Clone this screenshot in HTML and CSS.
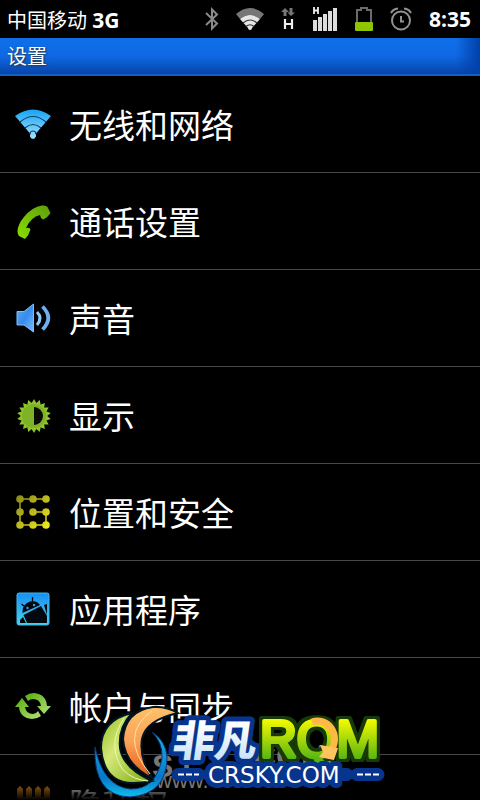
FILE: index.html
```html
<!DOCTYPE html>
<html lang="zh-CN">
<head>
  <meta charset="UTF-8">
  <meta name="viewport" content="width=device-width, initial-scale=1.0">
  <title>设置</title>
  <link rel="stylesheet" href="styles.css">
</head>
<body>

<div class="screen">
  <!-- 状态栏 -->
  <div class="status-bar">
    <div class="carrier">中国移动 <strong>3G</strong></div>
    <div class="status-icons">
      <svg width="14" height="24" viewBox="0 0 14 24" fill="none" stroke="#8a8a8a" stroke-width="2">
        <path d="M1 6 L12 16.500 L7 21.500 V2.500 L12 7.500 L1 18"/>
      </svg>
      <svg width="28" height="24" viewBox="0 0 28 24">
        <path d="M0 7 Q14 -5 28 7 L24 12 Q14 4 4 12 Z" fill="#777"/>
        <path d="M4 12 Q14 4 24 12 L16 21 A2 2 0 1 1 12 21 Z" fill="#e6e6e6"/>
        <path d="M7 16 Q14 10 21 16 M10 19.500 Q14 16 18 19.500" fill="none" stroke="#333" stroke-width="1.200"/>
      </svg>
      <svg width="14" height="24" viewBox="0 0 14 24">
        <path d="M4 1 L8 5 H5.500 V9 H2.500 V5 H0 Z M10 9 L6.500 5.500 H8.500 V1 H11.500 V5.500 H14 Z" fill="#777"/>
        <path d="M4 12 V22 M11 12 V22 M4 17 H11" fill="none" stroke="#eee" stroke-width="2.200"/>
      </svg>
      <svg width="26" height="24" viewBox="0 0 26 24">
        <path d="M2 0 V7 M6 0 V7 M2 3.500 H6" fill="none" stroke="#eee" stroke-width="1.800"/>
        <path d="M1 13 h4 v11 h-4z M6 10 h4 v14 h-4z M11 7 h4 v17 h-4z M16 4 h4 v20 h-4z M21 1 h4 v23 h-4z" fill="#ddd"/>
      </svg>
      <svg width="18" height="24" viewBox="0 0 18 24">
        <path d="M2 15 V3 H6 V1 H12 V3 H16 V15" fill="none" stroke="#6b6b6b" stroke-width="2"/>
        <rect x="0" y="15" width="18" height="9" rx="1" fill="#8fc400"/>
      </svg>
      <svg width="22" height="24" viewBox="0 0 22 24" fill="none" stroke="#929292" stroke-width="2">
        <circle cx="11" cy="13.500" r="9"/>
        <path d="M11 9 V14.500 H14 M1 6 Q3 2 8 1.500 M21 6 Q19 2 14 1.500"/>
      </svg>
      <strong class="clock">8:35</strong>
    </div>
  </div>

  <h1 class="title-bar">设置</h1>

  <!-- 设置列表 -->
  <nav class="settings">
    <a class="item" href="#">
      <svg class="icon" viewBox="0 0 40 40">
        <defs>
          <linearGradient id="wifi" x1="0" y1="0" x2="0" y2="1"><stop offset="0" stop-color="#16a4f5"/><stop offset="1" stop-color="#a5e0ff"/></linearGradient>
        </defs>
        <path d="M2 12 Q20 -1 38 12 L22.500 30 A3 3 0 1 1 17.500 30 Z" fill="url(#wifi)"/>
        <path d="M7 18 Q20 7 33 18 M12 24 Q20 17 28 24 M17 30 A3 3 0 0 1 23 30" fill="none" stroke="#0a4266" stroke-width="1.200"/>
      </svg>
      <span>无线和网络</span>
    </a>
    <a class="item" href="#">
      <svg class="icon" viewBox="0 0 40 40">
        <defs>
          <linearGradient id="phone" x1="1" y1="0" x2="0" y2="1"><stop offset="0" stop-color="#5f9c0c"/><stop offset="1" stop-color="#88e000"/></linearGradient>
        </defs>
        <path d="M29 4.500 Q33 4 34.500 6 L37.500 12 Q34 17 30 18.500 Q28 18 27 14 Q18 16 13 27 Q17 26 17.500 28.500 Q16 34 12 38 L6 35 Q4.500 33 4.500 30 Q5 23 11 16 Q19 6 29 4.500 Z" fill="url(#phone)"/>
      </svg>
      <span>通话设置</span>
    </a>
    <a class="item" href="#">
      <svg class="icon" viewBox="0 0 40 40">
        <defs>
          <linearGradient id="sound" x1="0" y1="0" x2="1" y2="1"><stop offset="0" stop-color="#5cabf8"/><stop offset=".5" stop-color="#368bec"/><stop offset="1" stop-color="#7bbcff"/></linearGradient>
        </defs>
        <path d="M4 13.500 H11 L20.500 6 V34 L11 27 H4 Z" fill="url(#sound)" stroke="#83bdf3"/>
        <path d="M24 14 Q30 20 24 27" fill="none" stroke="#8fc8ff" stroke-width="3"/>
        <path d="M29.500 8.500 Q41 20 29.500 31.500" fill="none" stroke="#70aef0" stroke-width="3.800"/>
      </svg>
      <span>声音</span>
    </a>
    <a class="item" href="#">
      <svg class="icon" viewBox="0 0 40 40">
        <defs>
          <path id="ray" d="M21 4 L35.700 29.500 L6.300 29.500 Z"/>
        </defs>
        <g fill="#8fc42d">
          <use href="#ray"/>
          <use href="#ray" transform="rotate(20 21 21)"/>
          <use href="#ray" transform="rotate(40 21 21)"/>
          <use href="#ray" transform="rotate(60 21 21)"/>
          <use href="#ray" transform="rotate(80 21 21)"/>
          <use href="#ray" transform="rotate(100 21 21)"/>
        </g>
        <circle cx="21" cy="21" r="12" fill="#7fb226"/>
        <path d="M21 12 A9 9 0 0 1 21 30 Z" fill="#080c02"/>
      </svg>
      <span>显示</span>
    </a>
    <a class="item" href="#">
      <svg class="icon" viewBox="0 0 40 40">
        <defs>
          <linearGradient id="lock" gradientUnits="userSpaceOnUse" x1="4" y1="4" x2="36" y2="36"><stop offset="0" stop-color="#8d8a16"/><stop offset="1" stop-color="#eeea20"/></linearGradient>
        </defs>
        <path d="M33 7 H7 V33 H33 V20 H20" fill="none" stroke="url(#lock)" stroke-width="1.500"/>
        <g fill="url(#lock)">
          <circle cx="7" cy="7" r="3.800"/><circle cx="20" cy="7" r="3.800"/><circle cx="33" cy="7" r="3.800"/>
          <circle cx="7" cy="20" r="3.800"/><circle cx="20" cy="20" r="3.800"/><circle cx="33" cy="20" r="3.800"/>
          <circle cx="7" cy="33" r="3.800"/><circle cx="20" cy="33" r="3.800"/><circle cx="33" cy="33" r="3.800"/>
        </g>
      </svg>
      <span>位置和安全</span>
    </a>
    <a class="item" href="#">
      <svg class="icon" viewBox="0 0 40 40">
        <defs>
          <linearGradient id="app" x1="0" y1="0" x2="0" y2="1"><stop offset="0" stop-color="#168ff5"/><stop offset="1" stop-color="#4bd2ee"/></linearGradient>
        </defs>
        <rect x="4" y="4" width="32" height="32" rx="2" fill="url(#app)" stroke="#3fb9ec"/>
        <path d="M9.500 24 Q9 15 17 12.500 Q24 11 27 16 Z" fill="#02090f"/>
        <path d="M11 17 L8.500 15 M19.500 12.500 V8" stroke="#02090f" stroke-width="1.300"/>
        <path d="M10.500 26 L28 17 L34 27 V34 H14 Z" fill="#02090f"/>
        <path d="M31 16 L34 15 V26 Z M7 31 L10 28 L13 34 H7 Z" fill="#02090f"/>
        <circle cx="14.500" cy="19" r="1.200" fill="#2ea5f2"/><circle cx="21" cy="16" r="1.200" fill="#2ea5f2"/>
      </svg>
      <span>应用程序</span>
    </a>
    <a class="item" href="#">
      <svg class="icon" viewBox="0 0 40 40">
        <defs>
          <linearGradient id="sync" x1="0" y1="0" x2="1" y2="1"><stop offset="0" stop-color="#55ae0d"/><stop offset="1" stop-color="#b5df78"/></linearGradient>
        </defs>
        <g fill="url(#sync)">
          <path d="M12 10 Q16 7 21 7 Q33 8 34 20 H38 L31 28 L24 20 H28 Q27 13 20 13 Q17 13 15 15 Z"/>
          <path d="M28 30 Q24 33 19 33 Q7 32 6 21 H2 L9 12 L16 21 H12 Q13 28 20 28 Q23 28 25 25 Z"/>
        </g>
      </svg>
      <span>帐户与同步</span>
    </a>
    <a class="item" href="#">
      <svg class="icon" viewBox="0 0 40 40">
        <path d="M4 6 L7 3 L10 6 V14 H13 V6 L16 3 L19 6 V14 H22 V6 L25 3 L28 6 V14 H31 V6 L34 3 L37 6 V36 H4 Z" fill="#e08818"/>
      </svg>
      <span>隐私权</span>
    </a>
  </nav>

  <div class="fade"></div>

  <!-- 水印 -->
  <svg class="watermark" viewBox="0 0 300 100">
    <defs>
      <linearGradient id="leaf" x1="0" y1="0" x2="1" y2="1"><stop offset="0" stop-color="#8fbd1c"/><stop offset=".4" stop-color="#d5e878"/><stop offset="1" stop-color="#76a80c"/></linearGradient>
      <linearGradient id="flame" x1="0" y1="0" x2="0" y2="1"><stop offset="0" stop-color="#ffc169"/><stop offset=".5" stop-color="#f9a257"/><stop offset="1" stop-color="#e85a12"/></linearGradient>
      <linearGradient id="wave" x1="0" y1="0" x2="0" y2="1"><stop offset="0" stop-color="#18b4ee"/><stop offset=".7" stop-color="#0878c8"/><stop offset="1" stop-color="#12bdea"/></linearGradient>
      <linearGradient id="lime" gradientUnits="userSpaceOnUse" x1="0" y1="20" x2="0" y2="58"><stop offset="0" stop-color="#f2fa00"/><stop offset="1" stop-color="#5cb612"/></linearGradient>
      <linearGradient id="ice" x1="0" y1="0" x2="0" y2="1"><stop offset=".3" stop-color="#ffffff"/><stop offset="1" stop-color="#b9dcf6"/></linearGradient>
    </defs>
    <g class="ghost">
      <text class="ghost-logo" x="62" y="77">SJ</text>
      <text class="ghost-logo" x="154" y="67">.COM</text>
      <text class="ghost-url" x="66" y="88">www.</text>
    </g>
    <path d="M5 47 Q3 96 40 97 Q77 94 77 57 Q76 41 62 32 Q73 43 72 58 Q66 90 40 89 Q13 86 5 47 Z" fill="url(#wave)" stroke="#06387a"/>
    <path d="M42 13 Q11 20 11 48 Q14 84 44 83 Q53 83 62 81 Q33 68 30 48 Q28 28 42 13 Z" fill="url(#leaf)" stroke="#021522" stroke-width="2"/>
    <path d="M88 13 Q76 6 63 7 Q35 11 33 39 Q35 65 62 78 Q49 58 52 39 Q56 20 88 13 Z" fill="url(#flame)" stroke="#021522" stroke-width="2"/>
    <path d="M34 18 Q16 45 33 70 Q43 80 58 81" fill="none" stroke="#eef6b0"/>
    <path d="M62 11 Q28 35 60 74" fill="none" stroke="#ffe0a8"/>
    <g class="badge-blue">
      <text class="brand" transform="skewX(-8)" x="89" y="56" fill="url(#ice)">非凡</text>
    </g>
    <text class="rqm" x="170" y="57" fill="url(#lime)" stroke="url(#lime)">RQM</text>
    <path d="M222 22 A17 18 0 0 1 241 50" fill="none" stroke="#ffb846" stroke-width="7"/>
    <path d="M230 45 L248 48 L244 60 L229 57 L233 52 Z" fill="#ffc45c"/>
    <g class="badge-blue">
      <path d="M88 74.500 H109 M267 74.500 H288 M119 74.500 H257" class="dash-back"/>
      <text class="site" x="118" y="83" fill="#fff">CRSKY.COM</text>
    </g>
    <path d="M88 74.500 H109 M267 74.500 H289" class="dash"/>
  </svg>
</div>

</body>
</html>
```
FILE: styles.css
```css
body {
  margin: 0;
  background: #000;
  color: #fff;
  font-family: "Open Sans", "Noto Sans CJK SC", sans-serif;
}

.screen {
  position: relative;
  height: 100vh;
  overflow: hidden;
}

/* 状态栏 */
.status-bar {
  display: flex;
  justify-content: space-between;
  align-items: center;
  height: 38px;
  padding: 0 9px 0 7px;
  font-size: 20px;
}

.status-bar strong {
  font-size: 21px;
}

.status-icons {
  display: flex;
  align-items: center;
  gap: 17px;
}

.title-bar {
  box-sizing: border-box;
  height: 38px;
  margin: 0;
  padding-left: 7px;
  border-bottom: 2px solid #1260c4;
  background: linear-gradient(to right, transparent calc(100% - 24px), #0040a8), linear-gradient(#0d70e8, #1068e4 50%, #0744aa);
  font-size: 20px;
  font-weight: normal;
  line-height: 38px;
  text-shadow: 1px 1px 2px #333;
}

/* 列表 */
.item {
  display: flex;
  align-items: center;
  gap: 16px;
  height: 96px;
  padding-left: 13px;
  border-bottom: 1px solid #484848;
  color: #fff;
  font-size: 33px;
  line-height: 48px;
  text-decoration: none;
}

.item span {
  padding-top: 4px;
}

.icon {
  width: 40px;
  height: 40px;
}

.fade {
  position: absolute;
  left: 0;
  right: 0;
  bottom: 0;
  height: 24px;
  background: linear-gradient(transparent, #000);
}

/* 水印 */
.watermark {
  position: absolute;
  left: 90px;
  bottom: 0;
  width: 300px;
  height: 100px;
}

.ghost {
  fill: #777;
  font-family: "Liberation Sans", sans-serif;
}

.ghost-logo {
  font-size: 32px;
  font-weight: bold;
}

.ghost-url {
  font-size: 22px;
}

.badge-blue text {
  stroke: #07358e;
  stroke-width: 10px;
  stroke-linejoin: round;
  paint-order: stroke;
}

.brand {
  font-family: "Noto Sans CJK SC", sans-serif;
  font-size: 42px;
  font-weight: 900;
}

.site {
  font-family: "DejaVu Sans", sans-serif;
  font-size: 23px;
}

.dash-back {
  fill: none;
  stroke: #07358e;
  stroke-width: 13px;
  stroke-linecap: round;
}

.dash {
  fill: none;
  stroke: #fff;
  stroke-width: 2px;
  stroke-dasharray: 6px 2px;
}

/* 四个方向的投影叠成深绿色描边 */
.rqm {
  font-family: "Liberation Sans", sans-serif;
  font-size: 51px;
  stroke-width: 4px;
  stroke-linejoin: round;
  filter: drop-shadow(0 3px #183a08) drop-shadow(0 -3px #183a08) drop-shadow(3px 0 #183a08) drop-shadow(-3px 0 #183a08);
}
```
